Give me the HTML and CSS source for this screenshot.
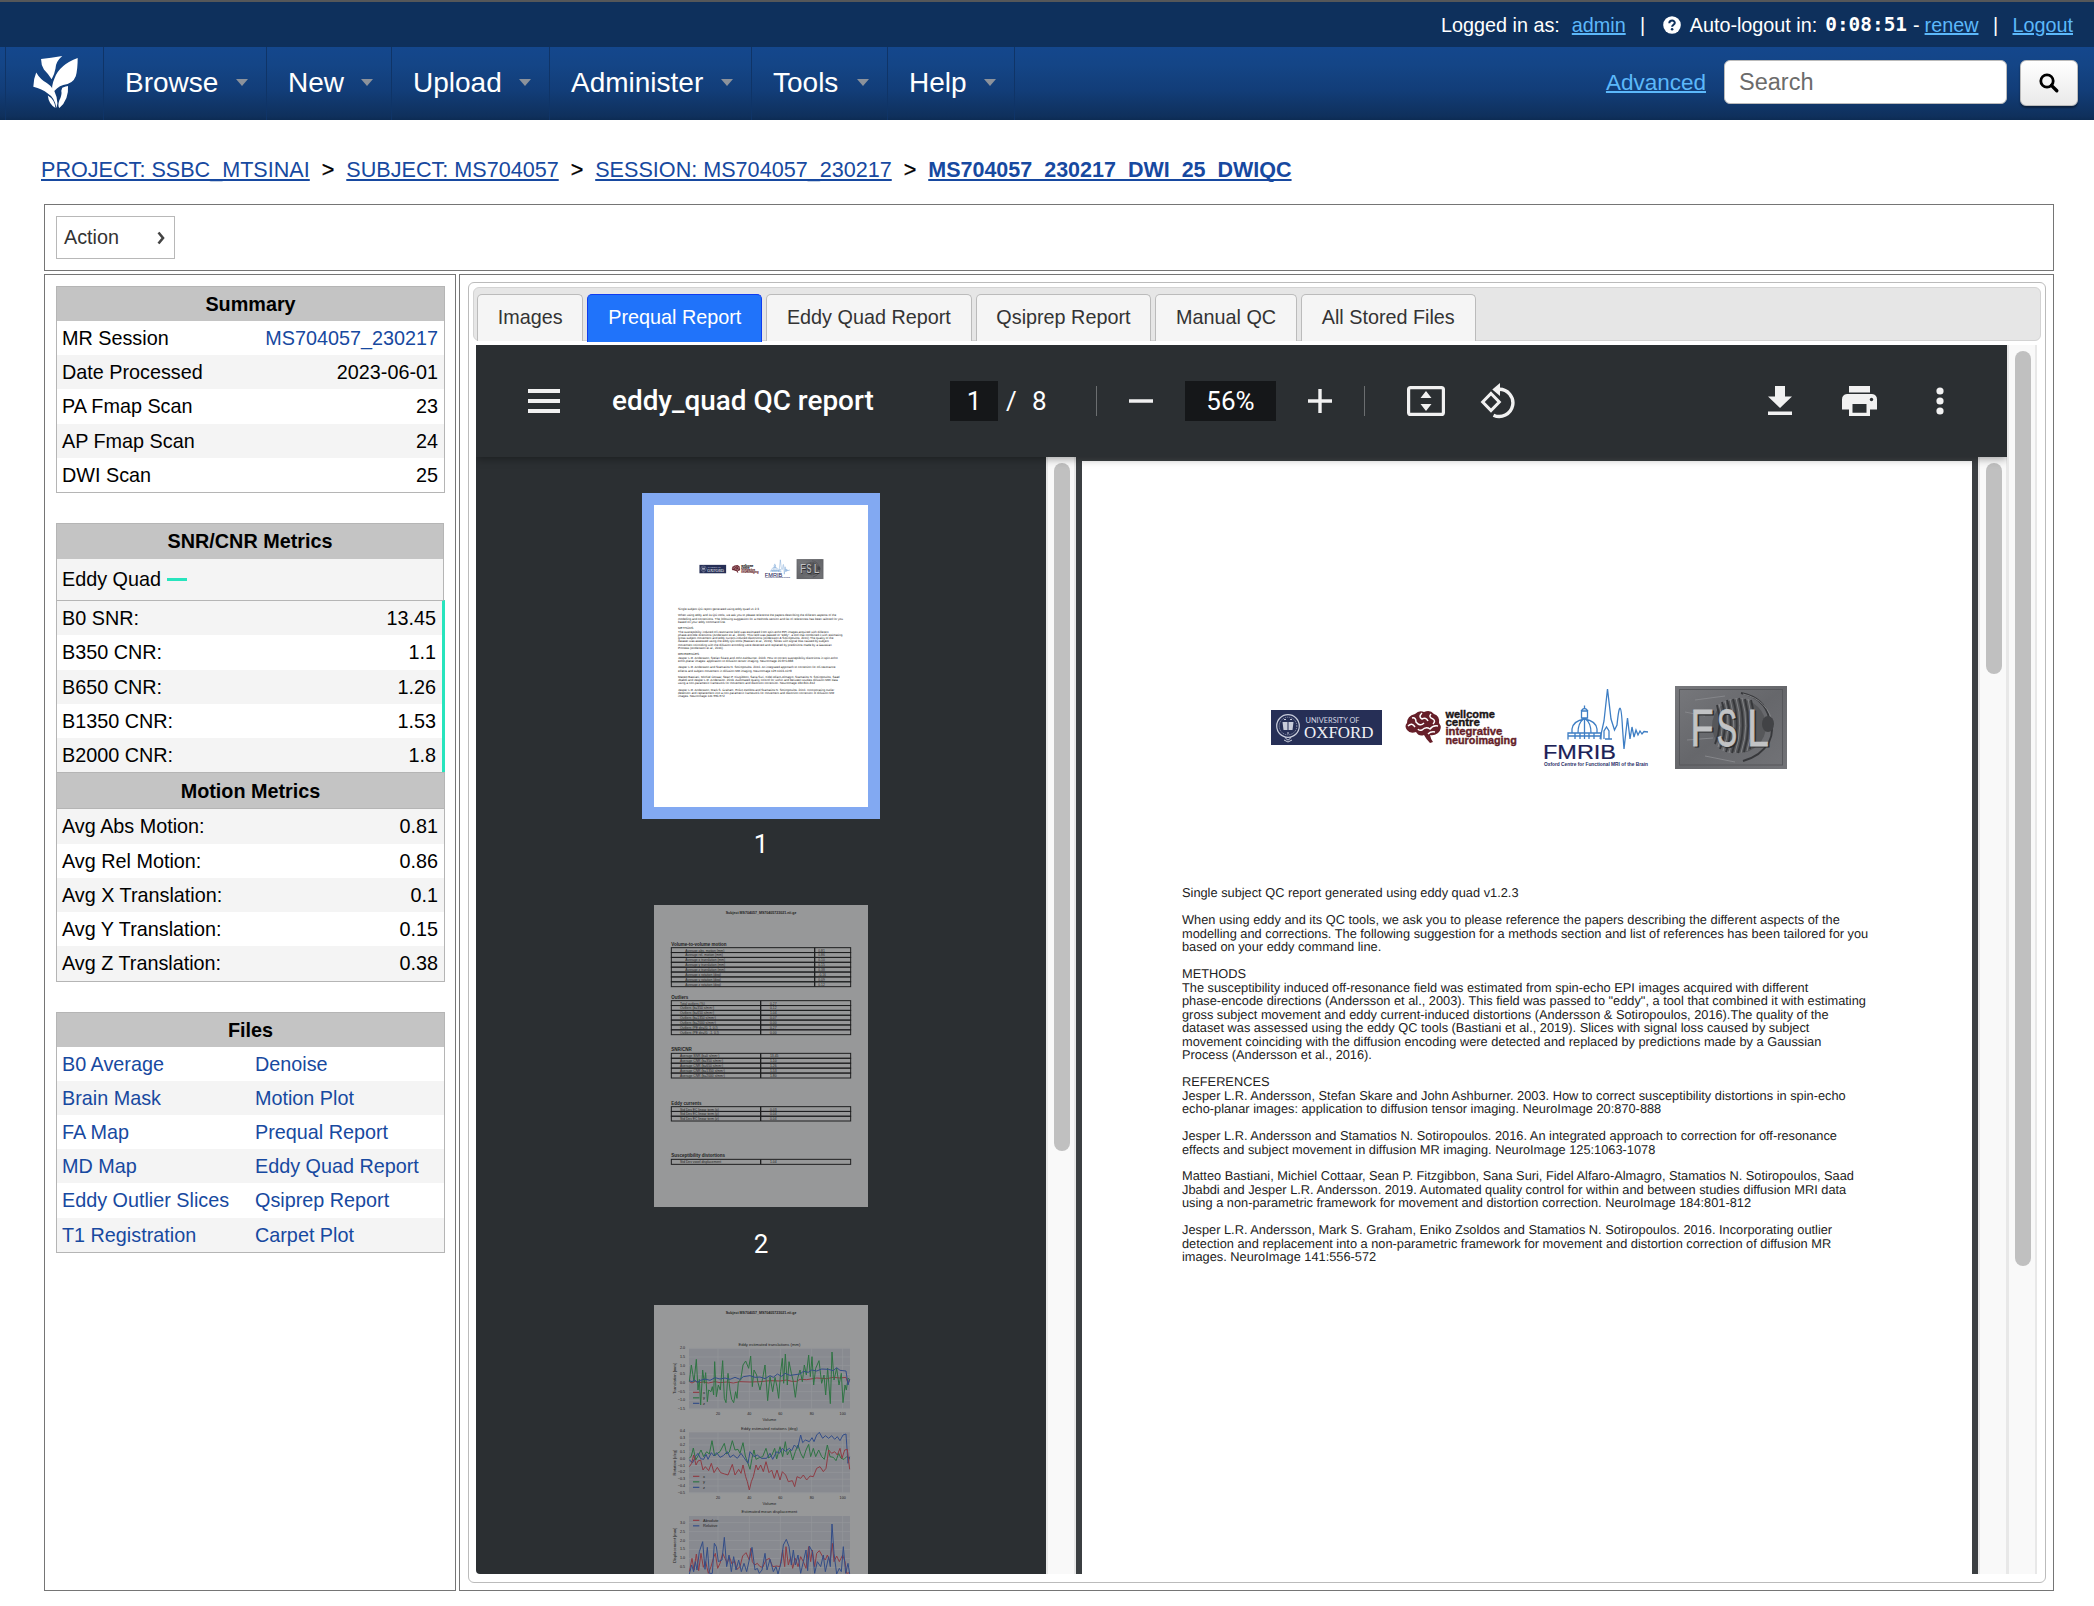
FILE: index.html
```html
<!DOCTYPE html>
<html lang="en">
<head>
<meta charset="utf-8">
<title>MS704057_230217_DWI_25_DWIQC</title>
<link rel="stylesheet" href="styles.css">
</head>
<body>
<header>
  <div class="userbar">
    <span>Logged in as:</span><a class="u-admin" href="#">admin</a><span class="bar">|</span>
    <svg class="help" viewBox="0 0 18 18"><circle cx="9" cy="9" r="8.8" fill="#fff"/><path d="M6.3 7.2C6.4 3.6 12 3.9 11.8 6.9C11.7 8.8 9.2 8.7 9.1 10.8" fill="none" stroke="#0e305c" stroke-width="2"/><circle cx="9.1" cy="13.3" r="1.3" fill="#0e305c"/></svg>
    <span>Auto-logout in:</span><b class="clock">0:08:51</b><span class="dash">-</span><a href="#">renew</a><span class="bar">|</span><a href="#">Logout</a>
  </div>
  <nav class="mainnav">
    <ul>
      <li class="logo"><svg viewBox="0 0 48 56"><g fill="#fff"><path d="M9 3Q19 2 31 0Q24 6 24 13Q23 19 20 24Q16 18 12 14Q9 9 9 3Z"/><path d="M47 2Q47 14 45 21Q42 29 32 30Q25 32 21 39Q19 32 23 23Q28 9 47 2Z"/><path d="M4 17Q8 24 15 28Q25 34 26 49L25 54Q23 43 16 39Q10 34 1 32Q1 24 4 17Z"/><path d="M16 41Q23 45 24 54Q17 50 16 41Z"/><path d="M31 33Q35 31 37 31Q38 45 28 54Q26 52 28 46Q31 40 30 36Z"/></g></svg></li>
      <li>Browse<i></i></li><li>New<i></i></li><li>Upload<i></i></li><li>Administer<i></i></li><li>Tools<i></i></li><li>Help<i></i></li><li class="end"></li>
    </ul>
    <div class="search">
      <a href="#">Advanced</a>
      <div class="field">Search</div>
      <button class="go" aria-label="Search"><svg viewBox="0 0 22 22"><circle cx="9" cy="9" r="6.2" fill="none" stroke="#000" stroke-width="2.8"/><path d="M13.4 13.4L18.8 18.8" stroke="#000" stroke-width="3.4" stroke-linecap="round"/></svg></button>
    </div>
  </nav>
</header>

<div class="crumbs"><a href="#">PROJECT: SSBC_MTSINAI</a><span>&gt;</span><a href="#">SUBJECT: MS704057</a><span>&gt;</span><a href="#">SESSION: MS704057_230217</a><span>&gt;</span><a class="here" href="#">MS704057_230217_DWI_25_DWIQC</a></div>

<main>
  <section class="actions"><div class="action">Action<svg viewBox="0 0 8 14"><path d="M1.5 1.5L6 7L1.5 12.5" fill="none" stroke="#444" stroke-width="2.6"/></svg></div></section>
  <div class="columns">
    <aside>
      <div class="tbl">
        <h3>Summary</h3>
        <div class="row"><span>MR Session</span><a href="#">MS704057_230217</a></div>
        <div class="row alt"><span>Date Processed</span><span>2023-06-01</span></div>
        <div class="row"><span>PA Fmap Scan</span><span>23</span></div>
        <div class="row alt"><span>AP Fmap Scan</span><span>24</span></div>
        <div class="row"><span>DWI Scan</span><span>25</span></div>
      </div>
      <div class="tbl snr">
        <h3>SNR/CNR Metrics</h3>
        <div class="legend">Eddy Quad<i></i></div>
      </div>
      <div class="tbl metrics">
        <div class="row alt"><span>B0 SNR:</span><span>13.45</span></div>
        <div class="row"><span>B350 CNR:</span><span>1.1</span></div>
        <div class="row alt"><span>B650 CNR:</span><span>1.26</span></div>
        <div class="row"><span>B1350 CNR:</span><span>1.53</span></div>
        <div class="row alt"><span>B2000 CNR:</span><span>1.8</span></div>
      </div>
      <div class="tbl motion">
        <h3>Motion Metrics</h3>
        <div class="row alt"><span>Avg Abs Motion:</span><span>0.81</span></div>
        <div class="row"><span>Avg Rel Motion:</span><span>0.86</span></div>
        <div class="row alt"><span>Avg X Translation:</span><span>0.1</span></div>
        <div class="row"><span>Avg Y Translation:</span><span>0.15</span></div>
        <div class="row alt"><span>Avg Z Translation:</span><span>0.38</span></div>
      </div>
      <div class="tbl files">
        <h3>Files</h3>
        <div class="row"><a href="#">B0 Average</a><a href="#">Denoise</a></div>
        <div class="row alt"><a href="#">Brain Mask</a><a href="#">Motion Plot</a></div>
        <div class="row"><a href="#">FA Map</a><a href="#">Prequal Report</a></div>
        <div class="row alt"><a href="#">MD Map</a><a href="#">Eddy Quad Report</a></div>
        <div class="row"><a href="#">Eddy Outlier Slices</a><a href="#">Qsiprep Report</a></div>
        <div class="row alt"><a href="#">T1 Registration</a><a href="#">Carpet Plot</a></div>
      </div>
    </aside>

    <section class="content">
      <div class="tabview">
        <div class="tabs"><span>Images</span><span class="on">Prequal Report</span><span>Eddy Quad Report</span><span>Qsiprep Report</span><span>Manual QC</span><span>All Stored Files</span></div>
        <div class="pane">
          <div class="viewer">
            <div class="toolbar">
              <svg class="menu" viewBox="0 0 32 24"><path d="M0 2H32M0 12H32M0 22H32" stroke="#f1f1f1" stroke-width="4"/></svg>
              <span class="title">eddy_quad QC report</span>
              <span class="pageno">1</span><span class="slash">/</span><span class="total">8</span>
              <span class="sep"></span>
              <svg class="minus" viewBox="0 0 24 24"><path d="M0 12H24" stroke="#f1f1f1" stroke-width="3.4"/></svg>
              <span class="zoom">56%</span>
              <svg class="plus" viewBox="0 0 24 24"><path d="M0 12H24M12 0V24" stroke="#f1f1f1" stroke-width="3.4"/></svg>
              <span class="sep two"></span>
              <svg class="fit" viewBox="0 0 38 30"><rect x="1.6" y="1.6" width="34.8" height="26.8" rx="2" fill="none" stroke="#f1f1f1" stroke-width="3.2"/><path d="M19 5L24.5 12H13.5ZM19 25L24.5 18H13.5Z" fill="#f1f1f1"/></svg>
              <svg class="rotate" viewBox="0 0 36 36"><path d="M11 10.5L19.3 19L11 27.5L2.7 19Z" fill="none" stroke="#f1f1f1" stroke-width="3"/><path d="M19 6.3A13.6 13.6 0 1 1 13.5 32.2" fill="none" stroke="#f1f1f1" stroke-width="3.4"/><path d="M20 0V13L12.3 6.5Z" fill="#f1f1f1"/></svg>
              <span class="spacer"></span>
              <svg class="dl" viewBox="0 0 24 30"><path d="M7 0H17V10.5H24L12 22L0 10.5H7ZM0 25.5H24V29H0Z" fill="#f1f1f1"/></svg>
              <svg class="print" viewBox="0 0 35 30"><path d="M7 0H28V6.5H7Z" fill="#f1f1f1"/><path d="M5 8H30Q35 8.5 35 13.5V23.5H28V30H7V23.5H0V13.5Q0 8.5 5 8Z" fill="#f1f1f1"/><path d="M10.5 18H24.5V26.8H10.5Z" fill="#2b2f32"/><circle cx="29.5" cy="13.5" r="1.7" fill="#2b2f32"/></svg>
              <svg class="dots" viewBox="0 0 8 28"><g fill="#f1f1f1"><circle cx="4" cy="4" r="3.6"/><circle cx="4" cy="14" r="3.6"/><circle cx="4" cy="24" r="3.6"/></g></svg>
            </div>
            <div class="stage">
              <div class="thumbs">
                <div class="thumb sel" id="thumb1"></div><b>1</b>
                <svg class="thumb dim" id="thumb2" viewBox="42 45 642 906"></svg><b>2</b>
                <svg class="thumb dim" id="thumb3" viewBox="42 45 642 906"></svg>
              </div>
              <div class="scroll"><i class="t1"></i></div>
              <div class="pages">
                <article class="page">
                  <div class="logos">
                    <svg width="111" height="35"><rect width="111" height="35" fill="#262f56"/><g fill="none" stroke="#c9cddb"><circle cx="17" cy="16" r="11.3" stroke-width="1.2"/><circle cx="17" cy="16" r="8.8" stroke-width=".7" stroke-dasharray="1 1"/><path d="M14 27Q17 33 20 27M13 30L17 32L21 30" stroke-width="1"/></g><path d="M11.5 12H16.5V20H12.5ZM17.5 12H22.5L21.5 20H17.5Z" fill="#c9cddb"/><path d="M13 9.5H15M19 9.5H21M16 23H18" stroke="#c9cddb"/><text x="34.5" y="12.8" font-family="Lato" font-size="7.4" fill="#d4d7e2" textLength="54">UNIVERSITY OF</text><text x="33" y="28.2" font-family="Liberation Serif" font-size="17" fill="#f0f1f5" textLength="69.5" lengthAdjust="spacingAndGlyphs">OXFORD</text></svg>
                    <svg width="112" height="37" class="wellcome"><path d="M10 5Q14 1 19 3Q25 0 29 5Q35 7 34 14Q38 19 33 24Q29 27 25 26Q26 31 28 33L25 34Q21 30 19 26Q14 28 11 23Q5 25 2 21Q-1 17 2 14Q2 7 10 5Z" fill="#661f29"/><path d="M3 17Q7 13 10 18M7 9Q11 8 11 13Q15 18 19 14M17 4Q13 8 17 10Q21 8 23 12M26 5Q23 8 28 10Q31 12 28 15M33 17Q28 16 25 20Q21 17 17 21Q14 22 13 20M23 25Q26 22 30 23" fill="none" stroke="#fff" stroke-width="1.5"/><g font-family="Liberation Sans" font-weight="700" font-size="11.4" stroke-width=".4"><g fill="#1a1516" stroke="#1a1516"><text x="40.4" y="8.6" textLength="49.5" lengthAdjust="spacingAndGlyphs">wellcome</text><text x="40.4" y="17.4" textLength="34.5" lengthAdjust="spacingAndGlyphs">centre</text></g><g fill="#661f29" stroke="#661f29"><text x="40.4" y="26.4" textLength="57" lengthAdjust="spacingAndGlyphs">integrative</text><text x="40.4" y="35.2" textLength="71.4" lengthAdjust="spacingAndGlyphs">neuroimaging</text></g></g></svg>
                    <svg width="104" height="79"><g fill="none" stroke="#3e7ec4" stroke-width="1.3"><path d="M24 51.5V45H57V51.5M24 48H57M28 45V41Q29 33 40.5 31Q52 33 53 41V45M34 45Q34 35 39 31.5M47 45Q47 35 42 31.5M40.5 32V51M31 45V51M36 45V51M45 45V51M50 45V51M37.5 30V23H43.5V30ZM37 23Q40.5 18 44 23M40.5 20V17.500"/><path d="M56 51L60 33L63.500 1L67 31L70.500 42L73 37Q76.500 2 78.500 40L80 61L83.500 30L86 51L88 39L90 49L92 42L94 47L96 43L98 46L100 43.500L104 44M60 51V43L62.500 39L65 43V51M61 51H68"/></g><text x="-1" y="70.500" font-family="Liberation Sans" font-size="19.500" fill="#1b2156" stroke="#1b2156" stroke-width=".2" textLength="73" lengthAdjust="spacingAndGlyphs">FMRIB</text><text x="0" y="78" font-family="Liberation Sans" font-weight="700" font-size="5.700" fill="#2a2f68" textLength="104" lengthAdjust="spacingAndGlyphs">Oxford Centre for Functional MRI of the Brain</text></svg>
                    <svg width="112" height="83"><defs><linearGradient id="slate" x1="0" y1="0" x2="1" y2="1"><stop offset="0" stop-color="#77787c"/><stop offset=".5" stop-color="#66676b"/><stop offset="1" stop-color="#727377"/></linearGradient></defs><rect width="112" height="83" fill="url(#slate)"/><rect x="4.500" y="3.500" width="103" height="75.500" fill="none" stroke="#56575b"/><path d="M10 26L30 30M12 54L38 52M20 14L50 10M30 70L60 76" stroke="#85868a" fill="none"/><ellipse cx="64" cy="40" rx="27" ry="27" fill="#56575a"/><g fill="none" stroke="#37383b" stroke-width="1.900"><path d="M42 19Q48 40 40 58M47 16Q54 40 45 63M52 14Q60 40 51 66M58 13Q66 40 57 67M64 12Q72 40 63 67M70 13Q77 40 69 66M76 14Q83 40 75 63M66 7Q90 12 94 32Q100 44 94 56Q86 70 68 75"/></g><g fill="none" stroke="#8e8f92" stroke-width=".8"><path d="M44 18Q51 40 43 61M50 15Q57 40 48 65M55 13Q63 40 54 67M61 12Q69 40 60 67M67 12Q75 40 66 67M73 13Q80 40 72 65M68 8Q94 14 98 40"/></g><ellipse cx="93" cy="38" rx="6" ry="8" fill="#424346"/><g font-family="Liberation Sans" font-size="51" text-anchor="middle"><g fill="#2c2d2f" stroke="#2c2d2f"><text transform="translate(28.500 61)scale(.74 1)">F</text><text transform="translate(53.500 61)scale(.6 1)">S</text><text transform="translate(84.500 61)scale(.76 1)">L</text></g><g fill="#c2c3c5" stroke="#c2c3c5" stroke-width=".8"><text transform="translate(27 59.500)scale(.74 1)">F</text><text transform="translate(52 59.500)scale(.6 1)">S</text><text transform="translate(83 59.500)scale(.76 1)">L</text></g></g></svg>
                  </div>
                  <pre>Single subject QC report generated using eddy quad v1.2.3

When using eddy and its QC tools, we ask you to please reference the papers describing the different aspects of the
modelling and corrections. The following suggestion for a methods section and list of references has been tailored for you
based on your eddy command line.

METHODS
The susceptibility induced off-resonance field was estimated from spin-echo EPI images acquired with different
phase-encode directions (Andersson et al., 2003). This field was passed to "eddy", a tool that combined it with estimating
gross subject movement and eddy current-induced distortions (Andersson &amp; Sotiropoulos, 2016).The quality of the
dataset was assessed using the eddy QC tools (Bastiani et al., 2019). Slices with signal loss caused by subject
movement coinciding with the diffusion encoding were detected and replaced by predictions made by a Gaussian
Process (Andersson et al., 2016).

REFERENCES
Jesper L.R. Andersson, Stefan Skare and John Ashburner. 2003. How to correct susceptibility distortions in spin-echo
echo-planar images: application to diffusion tensor imaging. NeuroImage 20:870-888

Jesper L.R. Andersson and Stamatios N. Sotiropoulos. 2016. An integrated approach to correction for off-resonance
effects and subject movement in diffusion MR imaging. NeuroImage 125:1063-1078

Matteo Bastiani, Michiel Cottaar, Sean P. Fitzgibbon, Sana Suri, Fidel Alfaro-Almagro, Stamatios N. Sotiropoulos, Saad
Jbabdi and Jesper L.R. Andersson. 2019. Automated quality control for within and between studies diffusion MRI data
using a non-parametric framework for movement and distortion correction. NeuroImage 184:801-812

Jesper L.R. Andersson, Mark S. Graham, Eniko Zsoldos and Stamatios N. Sotiropoulos. 2016. Incorporating outlier
detection and replacement into a non-parametric framework for movement and distortion correction of diffusion MR
images. NeuroImage 141:556-572</pre>
                </article>
              </div>
              <div class="scroll right"><i class="t2"></i></div>
            </div>
          </div>
          <div class="scroll outer"><i class="t3"></i></div>
        </div>
      </div>
    </section>
  </div>
</main>
<script src="script.js"></script>
</body>
</html>
```
FILE: styles.css
```css
* { box-sizing: border-box; }
body { margin: 0; background: #fff; color: #000; font: 20px/1 "Liberation Sans", Arial, sans-serif; height: 1606px; overflow: hidden; }
a { color: #1749a0; text-decoration: none; }
svg { display: block; flex: none; }

.userbar { height: 47px; border-top: 2px solid #555759; background: #0e305c; color: #fff; display: flex; align-items: center; justify-content: flex-end; padding: 0 21px 0 0; font-size: 19.8px; line-height: 24px; }
.userbar a, .search a { color: #5cb8fa; text-decoration: underline; text-decoration-thickness: 1.5px; }
.u-admin { margin-left: 12px; }
.bar { width: 34px; text-align: center; }
.help { width: 18px; height: 18px; margin: 0 9px 0 3px; }
.clock { font: bold 19.4px/24px "DejaVu Sans Mono", monospace; margin-left: 8px; }
.dash { margin: 0 5px 0 6px; }

.mainnav { height: 73px; background: linear-gradient(#14478d 0%, #144586 25%, #123d78 60%, #0f305c 95%, #0d2b53 100%); display: flex; justify-content: space-between; }
.mainnav ul { list-style: none; margin: 0; padding: 0 0 0 5px; display: grid; grid-template-columns: 98px 163px 125px 158px 202px 136px 127px 1px; }
.mainnav li { border-left: 1px solid #0f3467; display: flex; align-items: center; justify-content: space-between; padding: 0 18px 2px 21px; color: #fff; font-size: 28px; }
.mainnav li.end { padding: 0; }
.mainnav li.logo { padding: 0 0 1px 26px; }
.logo svg { width: 47px; height: 54px; }
.mainnav li i { border: 6.5px solid transparent; border-top: 7px solid #8c929b; border-bottom: 0; }
.search { display: flex; align-items: flex-start; padding: 13px 16px 0 0; }
.search a { font-size: 22.5px; line-height: 45px; margin-right: 18px; }
.field { width: 283px; height: 44px; border: 1px solid #bbb; border-radius: 6px; background: #fff; color: #6b6b6b; font-size: 23.5px; line-height: 42px; padding-left: 14px; margin-right: 13px; }
.go { width: 58px; height: 46px; border: 1px solid #bbb; border-radius: 6px; background: linear-gradient(#fff, #e9e9e9); padding: 0; display: flex; align-items: center; justify-content: center; box-shadow: 0 2px 2px rgba(0,0,0,.4); }
.go svg { width: 22px; height: 22px; }

.crumbs { height: 84px; padding: 38px 0 0 41px; font-size: 21.6px; line-height: 24px; display: flex; white-space: pre; }
.crumbs a { text-decoration: underline; text-decoration-thickness: 2px; text-underline-offset: 2px; text-decoration-skip-ink: none; }
.crumbs span { width: 36.5px; text-align: center; -webkit-text-stroke: .3px #000; }
.crumbs .here { font-weight: bold; font-size: 21.5px; }

main { margin-left: 44px; width: 2010px; }
.actions { height: 67px; border: 1px solid #757575; padding: 11px; }
.action { width: 119px; height: 43px; border: 1px solid #b8b8b8; display: flex; align-items: center; justify-content: space-between; padding: 0 9px 0 7px; font-size: 19.8px; color: #333; }
.action svg { width: 8px; height: 14px; }
.columns { margin-top: 3px; display: grid; grid-template-columns: 412px 1595px; gap: 3px; height: 1317px; }
aside { border: 1px solid #757575; padding: 11px 10px 0 11px; }
.tbl { border: 1px solid #b5b5b5; width: 389px; margin-bottom: 30px; }
.tbl h3 { margin: 0; height: 34px; background: #c4c4c4; text-align: center; font-size: 19.8px; line-height: 35px; }
.row { height: 34.24px; line-height: 34.6px; padding: 0 6px 0 5px; display: flex; justify-content: space-between; font-size: 19.8px; }
.alt { background: #f4f4f4; }
.snr { width: 388px; margin-bottom: 0; border-bottom: 0; }
.snr h3 { height: 35px; }
.legend { height: 41px; background: #f4f4f4; line-height: 41px; padding-left: 5px; display: flex; align-items: center; font-size: 19.8px; }
.legend i { width: 20px; height: 3px; background: #27e4bd; margin-left: 6px; }
.metrics { border-right: 3px solid #27e4bd; border-bottom: 0; margin-bottom: 0; }
.motion h3 { height: 36px; border-bottom: 1px solid #b5b5b5; line-height: 36px; }
.files .row { display: grid; grid-template-columns: 193px 1fr; }

.content { border: 1px solid #757575; padding: 7px 7px 7px 8px; }
.tabview { height: 1301px; border: 1px solid #bbb; border-radius: 6px; padding: 4px; }
.tabs { height: 54px; border: 1px solid #d3d3d3; border-radius: 6px; background: #e6e6e6; display: flex; align-items: flex-start; gap: 4px; padding: 6px 3px 0; }
.tabs span { height: 47px; border: 1px solid #bbb; border-bottom: 0; border-radius: 5px 5px 0 0; background: #f5f5f5; color: #333; font-size: 19.8px; line-height: 45px; padding: 0 19.8px; }
.tabs .on { background: #2073fa; border-color: #0f3cf0; color: #fff; height: 48px; }
.pane { margin: 4px 3px 0; display: flex; height: 1229px; }
.viewer { width: 1531px; background: #2b2f32; display: flex; flex-direction: column; border-radius: 0 0 0 4px; overflow: hidden; }
.toolbar { height: 112px; flex: none; background: #2b2f32; color: #fff; font: 26px/40px Roboto, sans-serif; display: flex; align-items: center; padding-left: 52px; position: relative; z-index: 1; box-shadow: 0 2px 8px rgba(0,0,0,.35); }
.menu { width: 32px; height: 24px; }
.title { font-weight: 500; font-size: 27.9px; width: 338px; margin-left: 52px; white-space: nowrap; }
.pageno { width: 48px; height: 40px; background: #151719; text-align: center; }
.slash { margin-left: 8px; width: 26px; }
.total { width: 64px; }
.sep { width: 1px; height: 30px; background: #6b6e70; }
.minus { width: 24px; height: 24px; margin: 0 32px; }
.zoom { width: 91px; height: 40px; background: #151719; text-align: center; }
.plus { width: 24px; height: 24px; margin: 0 32px; }
.fit { width: 38px; height: 30px; margin: 0 35px 0 42px; }
.rotate { width: 36px; height: 36px; }
.spacer { flex: 1; }
.dl { width: 24px; height: 30px; }
.print { width: 35px; height: 30px; margin: 0 59px 0 50px; }
.dots { width: 8px; height: 28px; margin-right: 63px; }
.stage { flex: 1; display: flex; min-height: 0; }
.thumbs { width: 570px; display: flex; flex-direction: column; align-items: center; padding-top: 36px; overflow: hidden; }
.thumb { width: 214px; height: 302px; flex: none; overflow: hidden; }
.thumb.sel { width: 238px; height: 326px; border: 12px solid #82a9f2; background: #fff; }
.thumb .page { transform: scale(.2404); transform-origin: 0 0; margin: 0; }
.dim { background: #979899; }
.thumbs b { font: 26px/51px Roboto, sans-serif; color: #fff; height: 86px; flex: none; }
.thumbs svg + b { height: 98px; padding-top: 12px; }
.scroll { width: 30px; flex: none; background: #f9f9f9; border: solid #e8e8e8; border-width: 0 2px; padding: 6px 6px 0; }
.scroll i { display: block; width: 16px; border-radius: 8px; background: #c0c0c0; }
.scroll.right { width: 29px; border-right-width: 1px; }
.t1 { height: 688px; }
.t2 { height: 211px; }
.t3 { height: 915px; }
.pages { width: 902px; padding: 4px 6px 0; background: #3b3f42; overflow: hidden; }
.page { width: 890px; height: 1256px; background: #fff; padding: 225px 0 0 100px; }
.logos { height: 83px; display: flex; align-items: center; padding-left: 89px; }
.logos svg { overflow: visible; }
.logos svg + svg { margin-left: 27px; }
.logos .wellcome.wellcome { margin-left: 23px; }
.page pre { margin: 117.3px 0 0; color: #222; font: 12.8px/13.48px "Liberation Sans", Arial, sans-serif; text-rendering: geometricPrecision; }
```
FILE: script.js
```js
// The first thumbnail repeats the open page at a smaller scale.
document.getElementById('thumb1').appendChild(document.querySelector('.page').cloneNode(true));

const text = (x, y, s, size, extra = '') =>
  `<text x="${x}" y="${y}" font-size="${size}" font-family="Liberation Sans" fill="#222" ${extra}>${s}</text>`;
const subject = text(257, 72, 'Subject MS704057_MS70405723021.nii.gz', 11, 'font-weight="700" textLength="212" lengthAdjust="spacingAndGlyphs"');

// Second page: summary tables.
const tables = [
  ['Volume-to-volume motion', 173, 290, 524, 136, [['Average abs. motion (mm)', '0.81'], ['Average rel. motion (mm)', '0.86'], ['Average x translation (mm)', '0.10'], ['Average y translation (mm)', '0.15'], ['Average z translation (mm)', '0.38'], ['Average x rotation (deg)', '-0.16'], ['Average y rotation (deg)', '0.09'], ['Average z rotation (deg)', '0.12']]],
  ['Outliers', 332, 434, 362, 120, [['Total outliers (%)', '0.27'], ['Outliers (b=350 s/mm²)', '0.12'], ['Outliers (b=650 s/mm²)', '1.04'], ['Outliers (b=1350 s/mm²)', '0.07'], ['Outliers (b=2000 s/mm²)', '0.00'], ['Outliers (PE dir=[0. 1. 0.])', '0.27'], ['Outliers (PE dir=[0. -1. 0.])', '0.00']]],
  ['SNR/CNR', 490, 564, 362, 120, [['Average SNR (b=0 s/mm²)', '13.45'], ['Average CNR (b=350 s/mm²)', '1.10'], ['Average CNR (b=650 s/mm²)', '1.26'], ['Average CNR (b=1350 s/mm²)', '1.53'], ['Average CNR (b=2000 s/mm²)', '1.80']]],
  ['Eddy currents', 650, 693, 362, 120, [['Std Dev EC linear term (x)', '0.03'], ['Std Dev EC linear term (y)', '0.04'], ['Std Dev EC linear term (z)', '0.04']]],
  ['Susceptibility distortions', 808, 823, 362, 120, [['Std Dev voxel displacement', '1.04']]]
];
document.getElementById('thumb2').innerHTML = subject + tables.map(([name, top, bottom, split, tx, rows]) => {
  const h = (bottom - top) / rows.length;
  return text(94, top - 6, name, 13.5, 'font-weight="700"') +
    rows.map(([k, v], i) => `<rect x="94" y="${top + i * h}" width="538" height="${h}" fill="none" stroke="#1e1f20" stroke-width="3"/>` +
      text(tx, top + i * h + 11.5, k, 10) + text(split === 524 ? 535 : 390, top + i * h + 11.5, v, 10)).join('') +
    `<path d="M${split} ${top}V${bottom}" stroke="#1e1f20" stroke-width="4"/>`;
}).join('');

// Third page: motion charts. The last one runs past the visible area, so it has no x axis.
const RED = '#8f3c44', GREEN = '#2f7443', BLUE = '#334d88';
const charts = [
  { title: 'Eddy estimated translations (mm)', axis: 'Translation [mm]', top: 175, bottom: 356, ticks: ['2.0', '1.5', '1.0', '0.5', '0.0', '−0.5', '−1.0', '−1.5'], first: 175, step: 26, legend: [307, ['x', 'y', 'z']],
    lines: [
      [RED, '148,275 156,279 166,274 176,278 190,276 205,279 225,275 240,278 260,276 280,279 300,275 330,276 360,275 390,272 420,273 440,270 455,274 470,274 480,268 500,269 530,264 560,266 580,262 600,264 618,262 624,280 629,268'],
      [GREEN, '148,275 154,225 162,275 169,208 174,300 178,268 182,345 188,240 193,280 197,248 202,335 206,300 213,305 217,290 221,315 224,215 229,320 235,285 241,300 248,212 253,325 258,338 264,250 270,300 275,328 281,338 287,305 291,325 295,275 302,270 309,225 317,213 326,235 332,198 337,290 342,240 350,255 354,278 360,300 368,265 375,225 383,332 390,260 398,305 405,262 411,290 416,325 422,245 427,205 431,280 436,192 442,285 447,215 454,250 459,270 466,322 473,265 480,240 487,275 493,225 499,255 506,195 511,260 516,200 521,285 527,235 537,212 545,280 552,255 557,315 563,235 571,341 576,186 582,270 590,235 597,285 604,250 609,338 615,285 619,300 624,265 629,268'],
      [BLUE, '148,272 156,275 164,270 172,277 182,271 195,267 210,271 225,263 240,267 255,264 270,268 285,262 300,268 310,260 330,257 345,262 360,261 375,266 390,257 400,262 412,252 425,259 435,250 450,256 465,254 480,252 490,244 505,247 515,240 530,243 545,237 565,238 580,242 590,233 600,241 618,243 624,285 629,268']] },
  { title: 'Eddy estimated rotations (deg)', axis: 'Rotation [deg]', top: 427, bottom: 608, ticks: ['0.4', '0.3', '0.2', '0.1', '0.0', '−0.1', '−0.2', '−0.3', '−0.4', '−0.5'], first: 424, step: 20.5, legend: [559, ['x', 'y', 'z']],
    lines: [
      [GREEN, '148,505 154,498 160,474 167,510 174,498 183,480 191,500 200,485 208,492 216,452 224,498 232,490 240,485 253,460 260,492 268,486 277,452 285,480 294,478 300,490 309,458 316,498 324,520 330,538 336,505 342,480 348,508 358,503 368,500 378,475 386,504 396,495 404,475 410,507 420,470 428,500 436,455 442,495 450,480 458,510 466,485 474,465 482,490 490,505 498,480 506,463 512,500 520,475 527,500 536,480 545,500 553,508 562,465 570,500 580,502 588,512 596,490 603,505 612,508 620,500 629,505'],
      [BLUE, '148,510 158,518 166,500 174,490 182,506 191,508 198,493 204,508 214,488 222,498 230,488 240,502 250,497 262,485 270,502 280,495 292,505 303,490 312,503 324,520 330,485 342,500 352,495 364,505 380,505 390,490 398,508 410,485 418,490 427,475 436,484 448,475 455,482 463,465 473,475 482,435 488,458 496,450 508,455 516,443 522,455 530,435 538,427 548,445 556,437 566,445 575,437 584,448 592,440 600,452 609,435 618,432 624,520 629,500'],
      [RED, '148,530 155,520 161,495 168,525 174,513 182,510 189,540 196,530 206,542 214,520 222,548 232,532 242,548 254,552 264,555 277,523 285,555 296,538 303,550 309,525 317,560 322,575 328,600 334,575 340,560 348,525 354,540 362,525 370,545 378,515 387,548 395,540 403,565 411,540 420,570 427,545 437,555 445,575 457,572 464,590 471,560 482,565 490,555 500,570 510,558 520,560 530,535 540,530 550,545 558,535 566,480 575,490 584,485 592,495 600,475 606,505 614,480 622,478 629,538']] },
  { title: 'Estimated mean displacement', axis: 'Displacement [mm]', top: 678, bottom: 870, mid: 766, ticks: ['3.0', '2.5', '2.0', '1.5', '1.0', '0.5'], first: 698, step: 26.8, legend: [691, ['Absolute', 'Relative']], clipped: true,
    lines: [
      [RED, '148,845 156,805 162,840 169,792 176,842 183,790 190,832 197,815 205,850 213,830 220,805 226,790 233,835 240,820 248,790 255,805 262,820 268,800 276,822 284,812 291,838 300,830 308,798 318,788 328,810 332,775 337,815 344,825 352,820 360,830 368,832 378,810 388,805 398,830 410,828 420,830 428,780 434,830 438,770 445,825 452,800 458,835 466,805 474,830 482,800 490,815 498,835 506,770 512,815 517,780 524,830 530,790 538,782 548,800 556,810 562,795 570,815 577,760 582,815 590,798 598,815 608,795 615,815 620,850 629,848'],
      [BLUE, '148,852 155,825 161,845 166,815 171,840 178,785 188,755 195,838 202,772 208,850 217,850 223,760 229,770 235,815 246,810 253,742 260,830 267,795 274,845 281,800 288,840 296,810 304,845 312,820 320,845 330,800 336,772 345,840 352,835 358,850 366,840 375,790 381,840 390,808 400,845 408,830 414,852 424,815 430,765 439,748 447,770 454,825 460,780 466,825 474,795 482,850 490,815 498,780 503,842 508,768 517,785 524,850 532,815 542,830 550,795 556,845 566,800 571,830 576,702 582,790 590,852 598,835 604,845 610,770 617,850 624,820 629,852']] }
];
document.getElementById('thumb3').innerHTML = subject + charts.map(c => {
  const [ly, names] = c.legend;
  const mid = c.mid || (c.top + c.bottom) / 2;
  const colors = names.length === 3 ? [RED, GREEN, BLUE] : [RED, BLUE];
  return text(388, c.top - 8, c.title, 12.5, 'text-anchor="middle"') +
    `<rect x="147" y="${c.top}" width="483" height="${c.bottom - c.top}" fill="#888a90"/>` +
    c.ticks.map((t, i) => `<path d="M147 ${c.first + i * c.step}H630" stroke="#96979b" stroke-width="2"/>` + text(135, c.first + i * c.step + 3, t, 11, 'text-anchor="end"')).join('') +
    [234, 328, 421, 515, 608].map((x, i) => `<path d="M${x} ${c.top}V${c.bottom}" stroke="#96979b" stroke-width="2"/>` + (c.clipped ? '' : text(x, c.bottom + 20, 20 * (i + 1), 11, 'text-anchor="middle"'))).join('') +
    (c.clipped ? '' : text(388, c.bottom + 37, 'Volume', 12.5, 'text-anchor="middle"')) +
    `<text transform="translate(108 ${mid})rotate(-90)" text-anchor="middle" font-size="12.5" font-family="Liberation Sans" fill="#222">${c.axis}</text>` +
    c.lines.map(([col, pts]) => `<polyline points="${pts}" fill="none" stroke="${col}" stroke-width="3" stroke-linejoin="round"/>`).join('') +
    names.map((n, i) => `<path d="M159 ${ly + i * 16.5}H178" stroke="${colors[i]}" stroke-width="3.5"/>` + text(189, ly + i * 16.5 + 4, n, 12)).join('');
}).join('');
```
